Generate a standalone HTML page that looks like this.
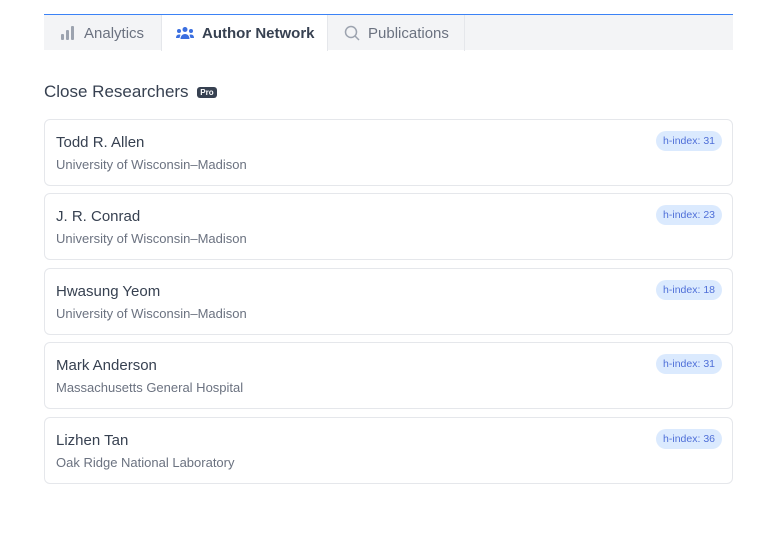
<!DOCTYPE html>
<html><head><style>
body{margin:0;background:#fff;font-family:"Liberation Sans",sans-serif;width:781px;height:556px;position:relative;overflow:hidden}
.tabs{position:absolute;left:44px;top:14px;width:689px;height:36px;background:#f3f4f6;border-top:1px solid #3b82f6;box-sizing:border-box}
.tab{position:absolute;top:0;height:36px;display:flex;align-items:center;font-size:15px;color:#6b7280}
.tab svg{margin-right:8px}
.t1{left:0;width:117px;padding-left:16px;box-sizing:border-box}
.t2{left:117px;width:167px;background:#fff;color:#374151;font-weight:bold;padding-left:14px;box-sizing:border-box;border-left:1px solid #e5e7eb;border-right:1px solid #e5e7eb}
.t3{left:284px;width:137px;padding-left:16px;box-sizing:border-box;border-right:1px solid #e5e7eb}
h2{position:absolute;left:44px;top:82px;margin:0;font-weight:normal;font-size:17px;color:#374151}
.pro{display:inline-block;background:#374151;color:#fff;font-size:8px;font-weight:bold;border-radius:3px;padding:1px 3px;vertical-align:2px;margin-left:4px}
.card{position:absolute;left:44px;width:689px;height:67px;border:1px solid #e5e7eb;border-radius:6px;box-sizing:border-box}
.n{position:absolute;left:11px;top:14px;font-size:15px;color:#374151}
.u{position:absolute;left:11px;top:37px;font-size:13px;color:#6b7280}
.b{position:absolute;right:10px;top:11px;background:#dbeafe;color:#4f6fd8;font-size:10.5px;border-radius:11px;padding:4px 7px}
</style></head><body>
<div class="tabs">
<div class="tab t1"><svg width="16" height="14"><rect x="1" y="8" width="3" height="6" rx="1" fill="#9ca3af"/><rect x="6" y="4" width="3" height="10" rx="1" fill="#9ca3af"/><rect x="11" y="0" width="3" height="14" rx="1" fill="#9ca3af"/></svg>Analytics</div>
<div class="tab t2"><svg width="18" height="14" fill="#3b6fe0"><circle cx="9" cy="3.5" r="2.5"/><circle cx="3" cy="5" r="2"/><circle cx="15" cy="5" r="2"/><path d="M4.5 13c0-3 2-5 4.5-5s4.5 2 4.5 5z"/><path d="M0 12c0-2 1-3.5 3-3.5 1 0 1.5.3 1.5.3L3.5 12z"/><path d="M18 12c0-2-1-3.5-3-3.5-1 0-1.5.3-1.5.3l1 3.2z"/></svg>Author Network</div>
<div class="tab t3"><svg width="16" height="16" fill="none" stroke="#9ca3af" stroke-width="1.5"><circle cx="7" cy="7" r="5.5"/><path d="M11 11l4 4"/></svg>Publications</div>
</div>
<h2>Close Researchers <span class="pro">Pro</span></h2>
<div class="card" style="top:119px"><div class="n">Todd R. Allen</div><div class="u">University of Wisconsin–Madison</div><div class="b">h-index: 31</div></div>
<div class="card" style="top:193px"><div class="n">J. R. Conrad</div><div class="u">University of Wisconsin–Madison</div><div class="b">h-index: 23</div></div>
<div class="card" style="top:268px"><div class="n">Hwasung Yeom</div><div class="u">University of Wisconsin–Madison</div><div class="b">h-index: 18</div></div>
<div class="card" style="top:342px"><div class="n">Mark Anderson</div><div class="u">Massachusetts General Hospital</div><div class="b">h-index: 31</div></div>
<div class="card" style="top:417px"><div class="n">Lizhen Tan</div><div class="u">Oak Ridge National Laboratory</div><div class="b">h-index: 36</div></div>
</body></html>
